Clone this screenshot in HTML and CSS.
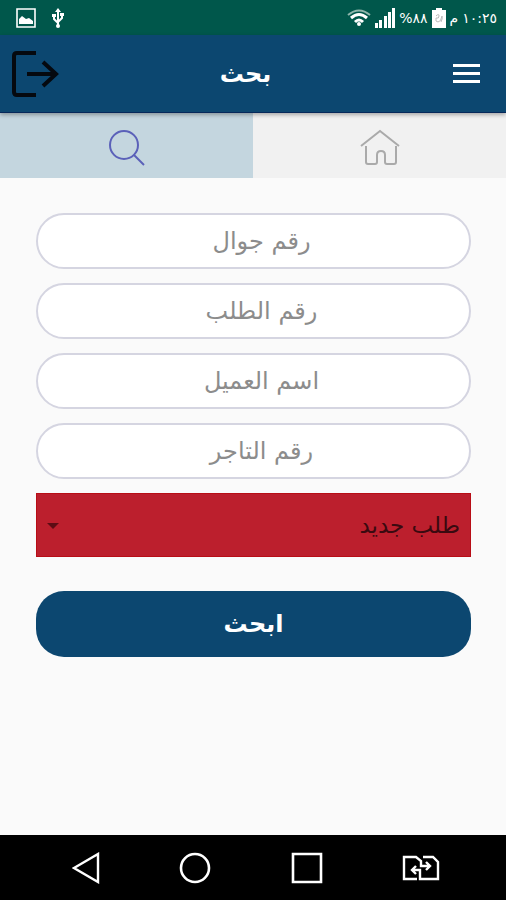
FILE: index.html
```html
<!DOCTYPE html>
<html lang="ar" dir="rtl">
<head>
    <meta charset="UTF-8">
    <meta name="viewport" content="width=device-width, initial-scale=1.0">
    <title>بحث</title>
    <link rel="stylesheet" href="styles.css">
</head>
<body>
    <div class="status-bar">
        <div class="status-group">
            <span>١٠:٢٥</span>
            <span>م</span>
            <svg width="14" height="20" viewBox="0 0 14 20">
                <path d="M4 0h6v2h4v18H0V2h4z" fill="#fff"/>
                <path d="M4 8q3-3 3 0t-3 2q-1 4 2 4t4-6q1 2-1 6" fill="none" stroke="#bbb"/>
            </svg>
            <span dir="ltr">%٨٨</span>
            <svg width="20" height="20" viewBox="0 0 20 20" fill="#fff">
                <path d="M0 15h3v5H0zM4 12h3v8H4zM9 8h3v12H9zM13 4h3v16h-3zM17 0h3v20h-3z"/>
            </svg>
            <svg width="24" height="18" viewBox="0 0 24 18" fill="none" stroke="#fff" stroke-width="3">
                <path d="M1 6Q12-3 23 6" stroke="#8fb5ab" stroke-width="2"/>
                <path d="M4 9q8-7 16 0M8 13q4-4 8 0"/>
                <circle cx="12" cy="15" r="2" fill="#fff" stroke="none"/>
            </svg>
        </div>
        <div class="status-group status-notices">
            <svg width="12" height="20" viewBox="0 0 12 20" fill="none" stroke="#fff" stroke-width="2">
                <path d="M6 3v15M2 8v3l4 4M10 7v3l-4 4"/>
                <path d="M6 0l3 4H3zM0 6h4v3H0zM8 5h4v3H8z" fill="#fff" stroke="none"/>
                <circle cx="6" cy="18" r="2" fill="#fff" stroke="none"/>
            </svg>
            <svg width="20" height="20" viewBox="0 0 20 20">
                <path d="M1 1h18v18H1z" fill="none" stroke="#fff" stroke-width="1.6"/>
                <path d="M3 16v-5l3-3 4 3 3-1 4 3v3z" fill="#fff"/>
            </svg>
        </div>
    </div>

    <header class="app-bar">
        <button class="icon-button" type="button" aria-label="القائمة">
            <svg width="27" height="20" viewBox="0 0 27 20" fill="#fff">
                <path d="M0 0h27v3H0zM0 8h27v3H0zM0 16h27v3H0z"/>
            </svg>
        </button>
        <h1>بحث</h1>
        <button class="icon-button" type="button" aria-label="خروج">
            <svg width="48" height="48" viewBox="0 0 48 48" fill="none" stroke="#05090f" stroke-width="4">
                <path d="M25 3H6Q3 3 3 6v36q0 3 3 3h19"/>
                <path d="M16 24h29M32 12l13 12-13 12"/>
            </svg>
        </button>
    </header>

    <nav class="tabs">
        <a class="tab" href="#home" aria-label="الرئيسية">
            <svg width="40" height="38" viewBox="0 0 40 38" fill="none" stroke="#aaa" stroke-width="2">
                <path d="M1 17L20 2l19 15"/>
                <path d="M6 17v16q0 2 2 2h7q2 0 2-2V26q0-4 4-4t4 4v7q0 2 2 2h7q2 0 2-2V17"/>
            </svg>
        </a>
        <a class="tab active" href="#search" aria-label="بحث">
            <svg width="36" height="38" viewBox="0 0 36 38" fill="none" stroke="#5b61b9" stroke-width="2">
                <circle cx="15" cy="16" r="14"/>
                <path d="M25 26l10 10"/>
            </svg>
        </a>
    </nav>

    <form class="search-form">
        <input type="text" placeholder="رقم جوال" aria-label="رقم جوال">
        <input type="text" placeholder="رقم الطلب" aria-label="رقم الطلب">
        <input type="text" placeholder="اسم العميل" aria-label="اسم العميل">
        <input type="text" placeholder="رقم التاجر" aria-label="رقم التاجر">
        <div class="select-box">
            <select aria-label="حالة الطلب">
                <option>طلب جديد</option>
            </select>
        </div>
        <button class="submit" type="submit">ابحث</button>
    </form>

    <div class="nav-bar">
        <button class="icon-button" type="button" aria-label="رجوع">
            <svg width="28" height="32" viewBox="0 0 28 32" fill="none" stroke="#fff" stroke-width="2.4">
                <path d="M2 16L26 2v28z"/>
            </svg>
        </button>
        <button class="icon-button" type="button" aria-label="الشاشة الرئيسية">
            <svg width="32" height="32" viewBox="0 0 32 32" fill="none" stroke="#fff" stroke-width="2.6">
                <circle cx="16" cy="16" r="14"/>
            </svg>
        </button>
        <button class="icon-button" type="button" aria-label="التطبيقات">
            <svg width="32" height="32" viewBox="0 0 32 32" fill="none" stroke="#fff" stroke-width="2.6">
                <path d="M2 2h28v28H2z"/>
            </svg>
        </button>
        <button class="icon-button" type="button" aria-label="تبديل الشريحة">
            <svg width="38" height="26" viewBox="0 0 38 26" fill="none" stroke="#fff" stroke-width="2.4">
                <path d="M15 24H2V2h12l5 4v5h9M24 7l4 4-4 4"/>
                <path d="M21 2h10l5 5v17H18v-9h-7M14 11l-4 4 4 4"/>
            </svg>
        </button>
    </div>
</body>
</html>
```
FILE: styles.css
```css
:root {
    --color-primary: #0c4770;
    --color-status: #00574b;
    --color-danger: #bc1f2d;
    --color-page: #fafafa;
}

* {
    box-sizing: border-box;
}

body {
    margin: 0;
    min-height: 100vh;
    display: flex;
    flex-direction: column;
    background: var(--color-page);
    font-family: 'DejaVu Sans', sans-serif;
}

svg {
    display: block;
}

button,
input,
select {
    font-family: inherit;
}

.status-bar {
    display: flex;
    justify-content: space-between;
    align-items: center;
    height: 35px;
    padding: 0 9px 0 16px;
    background: var(--color-status);
    color: #fff;
    font-size: 14px;
}

.status-group {
    display: flex;
    align-items: center;
    gap: 4px;
}

.status-notices {
    gap: 16px;
}

.app-bar {
    position: relative;
    z-index: 1;
    display: grid;
    grid-template-columns: 1fr auto 1fr;
    align-items: center;
    height: 78px;
    padding: 0 26px 0 11px;
    background: var(--color-primary);
    border-bottom: 1px solid #06285a;
    box-shadow: 0 2px 4px rgba(0, 0, 0, 0.3);
}

.app-bar h1 {
    margin: 0;
    color: #fff;
    font-size: 24px;
}

.icon-button {
    justify-self: start;
    padding: 0;
    border: none;
    background: none;
    cursor: pointer;
}

.icon-button:last-child {
    justify-self: end;
}

.tabs {
    display: grid;
    grid-template-columns: 1fr 1fr;
    height: 65px;
}

.tab {
    display: flex;
    justify-content: center;
    align-items: center;
    padding-top: 4px;
    background: #f1f1f1;
}

.tab.active {
    background: #c4d6df;
}

.search-form {
    flex: 1;
    display: flex;
    flex-direction: column;
    gap: 14px;
    padding: 35px 35px 35px 36px;
}

.search-form input {
    width: 100%;
    height: 56px;
    padding: 0 12px 0 28px;
    border: 2px solid #d5d5e1;
    border-radius: 28px;
    background: #fff;
    font-size: 24px;
    text-align: center;
}

.search-form input::placeholder {
    color: #8c8c8c;
}

.select-box {
    position: relative;
}

.select-box::after {
    content: "";
    position: absolute;
    left: 11px;
    top: 30px;
    border: 6px solid transparent;
    border-top-color: #5c0c14;
    border-bottom: none;
    pointer-events: none;
}

.select-box select {
    appearance: none;
    display: block;
    width: 100%;
    height: 64px;
    padding: 0 10px;
    border: 1px solid #b80d16;
    border-radius: 0;
    background: var(--color-danger);
    color: #3a0a10;
    font-size: 23px;
}

.submit {
    height: 66px;
    margin-top: 20px;
    border: none;
    border-radius: 28px;
    background: var(--color-primary);
    color: #fff;
    font-size: 24px;
    font-weight: bold;
    cursor: pointer;
}

.nav-bar {
    display: flex;
    direction: ltr;
    justify-content: space-between;
    align-items: center;
    height: 65px;
    padding: 0 66px 0 72px;
    background: #000;
}
```
